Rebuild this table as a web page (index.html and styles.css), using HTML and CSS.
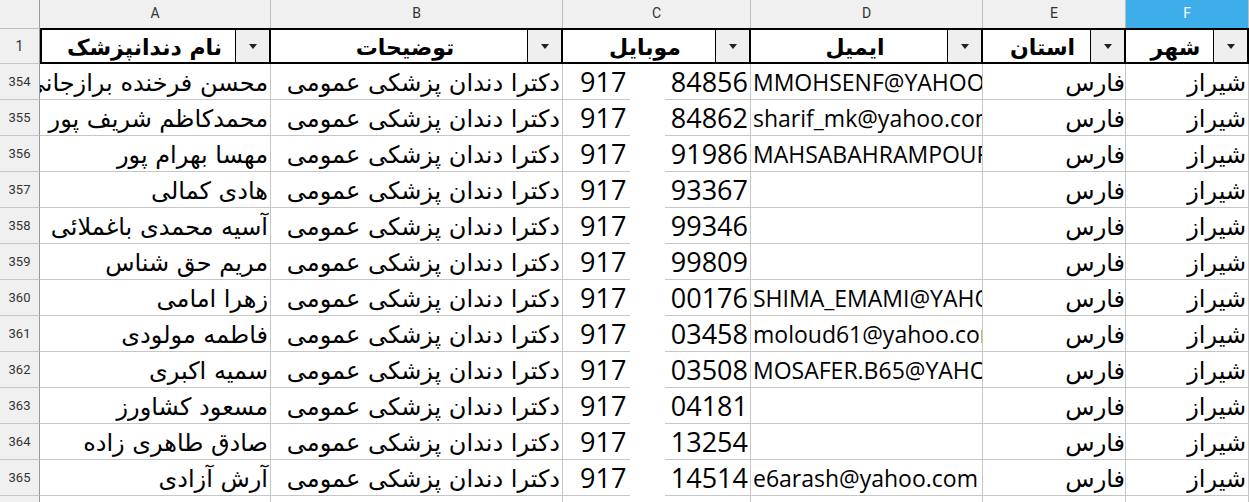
FILE: index.html
```html
<!DOCTYPE html>
<html lang="fa">
<head>
<meta charset="utf-8">
<title>Sheet</title>
<link rel="stylesheet" href="styles.css">
</head>
<body>
<div class="sheet">
  <div class="row colhdr">
    <div class="c rh"></div>
    <div class="c ca">A</div>
    <div class="c cb">B</div>
    <div class="c cc">C</div>
    <div class="c cd">D</div>
    <div class="c ce">E</div>
    <div class="c cf sel">F</div>
  </div>
  <div class="row hrow">
    <div class="c rh">1</div>
    <div class="c ca h first"><span class="ht">نام دندانپزشک</span><span class="dd"><i></i></span></div>
    <div class="c cb h"><span class="ht">توضیحات</span><span class="dd"><i></i></span></div>
    <div class="c cc h"><span class="ht">موبایل</span><span class="dd"><i></i></span></div>
    <div class="c cd h"><span class="ht">ایمیل</span><span class="dd"><i></i></span></div>
    <div class="c ce h"><span class="ht">استان</span><span class="dd"><i></i></span></div>
    <div class="c cf h"><span class="ht">شهر</span><span class="dd"><i></i></span></div>
  </div>

  <div class="row d"><div class="c rh">354</div><div class="c ca ar">محسن فرخنده برازجانی</div><div class="c cb ar">دکترا دندان پزشکی عمومی</div><div class="c cc mob"><span>917</span><span>84856</span></div><div class="c cd em">MMOHSENF@YAHOO.COM</div><div class="c ce ar">فارس</div><div class="c cf ar">شیراز</div></div>
  <div class="row d"><div class="c rh">355</div><div class="c ca ar">محمدکاظم شریف پور</div><div class="c cb ar">دکترا دندان پزشکی عمومی</div><div class="c cc mob"><span>917</span><span>84862</span></div><div class="c cd em">sharif_mk@yahoo.com</div><div class="c ce ar">فارس</div><div class="c cf ar">شیراز</div></div>
  <div class="row d"><div class="c rh">356</div><div class="c ca ar">مهسا بهرام پور</div><div class="c cb ar">دکترا دندان پزشکی عمومی</div><div class="c cc mob"><span>917</span><span>91986</span></div><div class="c cd em">MAHSABAHRAMPOUR@YAHOO.COM</div><div class="c ce ar">فارس</div><div class="c cf ar">شیراز</div></div>
  <div class="row d"><div class="c rh">357</div><div class="c ca ar">هادی کمالی</div><div class="c cb ar">دکترا دندان پزشکی عمومی</div><div class="c cc mob"><span>917</span><span>93367</span></div><div class="c cd em"></div><div class="c ce ar">فارس</div><div class="c cf ar">شیراز</div></div>
  <div class="row d"><div class="c rh">358</div><div class="c ca ar">آسیه محمدی باغملائی</div><div class="c cb ar">دکترا دندان پزشکی عمومی</div><div class="c cc mob"><span>917</span><span>99346</span></div><div class="c cd em"></div><div class="c ce ar">فارس</div><div class="c cf ar">شیراز</div></div>
  <div class="row d"><div class="c rh">359</div><div class="c ca ar">مریم حق شناس</div><div class="c cb ar">دکترا دندان پزشکی عمومی</div><div class="c cc mob"><span>917</span><span>99809</span></div><div class="c cd em"></div><div class="c ce ar">فارس</div><div class="c cf ar">شیراز</div></div>
  <div class="row d"><div class="c rh">360</div><div class="c ca ar">زهرا امامی</div><div class="c cb ar">دکترا دندان پزشکی عمومی</div><div class="c cc mob"><span>917</span><span>00176</span></div><div class="c cd em">SHIMA_EMAMI@YAHOO.COM</div><div class="c ce ar">فارس</div><div class="c cf ar">شیراز</div></div>
  <div class="row d"><div class="c rh">361</div><div class="c ca ar">فاطمه مولودی</div><div class="c cb ar">دکترا دندان پزشکی عمومی</div><div class="c cc mob"><span>917</span><span>03458</span></div><div class="c cd em">moloud61@yahoo.com</div><div class="c ce ar">فارس</div><div class="c cf ar">شیراز</div></div>
  <div class="row d"><div class="c rh">362</div><div class="c ca ar">سمیه اکبری</div><div class="c cb ar">دکترا دندان پزشکی عمومی</div><div class="c cc mob"><span>917</span><span>03508</span></div><div class="c cd em">MOSAFER.B65@YAHOO.COM</div><div class="c ce ar">فارس</div><div class="c cf ar">شیراز</div></div>
  <div class="row d"><div class="c rh">363</div><div class="c ca ar">مسعود کشاورز</div><div class="c cb ar">دکترا دندان پزشکی عمومی</div><div class="c cc mob"><span>917</span><span>04181</span></div><div class="c cd em"></div><div class="c ce ar">فارس</div><div class="c cf ar">شیراز</div></div>
  <div class="row d"><div class="c rh">364</div><div class="c ca ar">صادق  طاهری زاده</div><div class="c cb ar">دکترا دندان پزشکی عمومی</div><div class="c cc mob"><span>917</span><span>13254</span></div><div class="c cd em"></div><div class="c ce ar">فارس</div><div class="c cf ar">شیراز</div></div>
  <div class="row d"><div class="c rh">365</div><div class="c ca ar">آرش آزادی</div><div class="c cb ar">دکترا دندان پزشکی عمومی</div><div class="c cc mob"><span>917</span><span>14514</span></div><div class="c cd em">e6arash@yahoo.com</div><div class="c ce ar">فارس</div><div class="c cf ar">شیراز</div></div>
  <div class="row d"><div class="c rh"></div><div class="c ca"></div><div class="c cb"></div><div class="c cc mob"></div><div class="c cd"></div><div class="c ce"></div><div class="c cf"></div></div>
</div>
</body>
</html>
```
FILE: styles.css
```css
html, body {
  margin: 0;
  padding: 0;
  background: #ffffff;
}
.sheet {
  width: 1249px;
  height: 502px;
  overflow: hidden;
  font-family: "Open Sans", "DejaVu Sans", sans-serif;
  color: #000;
}
.row {
  display: grid;
  grid-template-columns: 40px 231px 292px 188px 232px 143px 123px;
}
.c {
  box-sizing: border-box;
  border-right: 1px solid #c6c6c6;
  border-bottom: 1px solid #c6c6c6;
  overflow: hidden;
  white-space: nowrap;
}
.colhdr {
  height: 28px;
}
.colhdr .c {
  background: #f0f0f0;
  border-right: 1px solid #bdbdbd;
  border-bottom: none;
  font-family: "Roboto", "DejaVu Sans", sans-serif;
  font-size: 14px;
  color: #333;
  line-height: 27px;
  text-align: center;
}
.colhdr .sel {
  background: #3daee9;
  color: #fff;
}
.rh {
  background: #f0f0f0;
  font-family: "Roboto", "DejaVu Sans", sans-serif;
  font-size: 13px;
  color: #333;
  text-align: center;
  border-right: 1px solid #9a9a9a !important;
  border-bottom: 1px solid #c6c6c6;
}
.hrow {
  height: 36px;
}
.hrow .rh {
  line-height: 34px;
  font-size: 14px;
  border-top: 1px solid #bdbdbd;
}
.h {
  display: flex;
  border-top: 2px solid #000;
  border-right: 2px solid #000;
  border-bottom: 2px solid #000;
  background: #fff;
}
.h.first {
  border-left: 2px solid #000;
}
.ht {
  flex: 1;
  text-align: center;
  font-family: "DejaVu Sans", sans-serif;
  font-weight: bold;
  font-size: 22px;
  line-height: 31px;
  padding-top: 2px;
  padding-left: 12px;
  direction: rtl;
  overflow: hidden;
}
.dd {
  width: 33px;
  flex: none;
  background: #efefef;
  border-left: 1px solid #000;
  display: flex;
  align-items: center;
  justify-content: center;
}
.dd i {
  width: 0;
  height: 0;
  border-left: 4px solid transparent;
  border-right: 4px solid transparent;
  border-top: 5px solid #222;
}
.d {
  height: 36px;
}
.d .c {
  line-height: 35px;
}
.d .rh {
  font-size: 13px;
}
.ar {
  direction: rtl;
  text-align: right;
  font-family: "DejaVu Sans", sans-serif;
  font-size: 24px;
  padding-right: 2px;
  padding-top: 4px;
  line-height: 31px !important;
}
.ce.ar {
  padding-right: 0;
}
.mob {
  display: flex;
  justify-content: space-between;
  padding-left: 17px;
  padding-right: 2px;
  font-size: 27px;
  border-bottom: none !important;
  background-image: linear-gradient(to right, #c6c6c6 67px, transparent 67px, transparent 102px, #c6c6c6 102px);
  background-size: 100% 1px;
  background-position: left bottom;
  background-repeat: no-repeat;
}
.em {
  font-size: 23px;
  padding-left: 2px;
  padding-top: 2px;
  line-height: 33px !important;
}
```
